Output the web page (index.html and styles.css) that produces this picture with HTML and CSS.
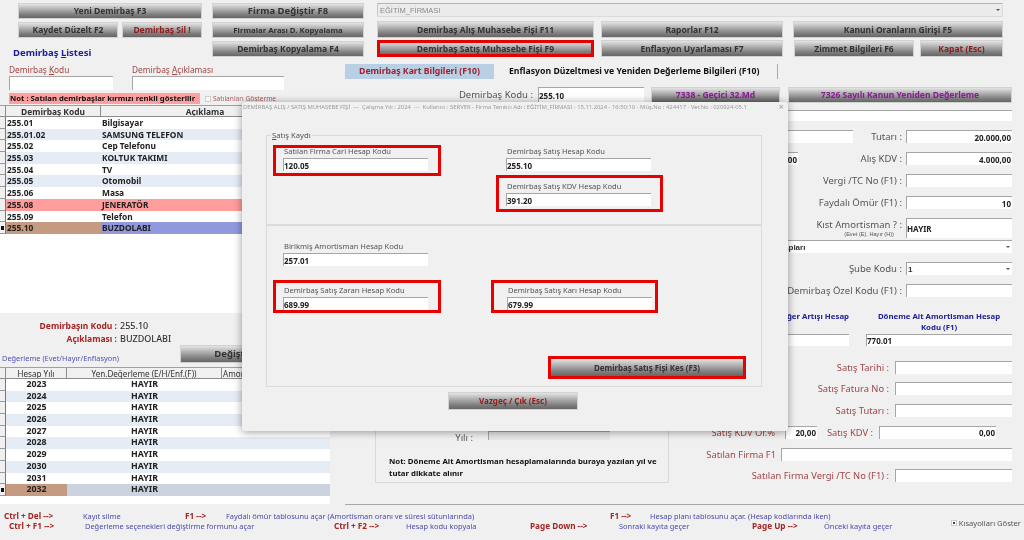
FILE: index.html
```
<!DOCTYPE html>
<html lang="tr">
<head>
	<meta charset="UTF-8">
	<title>Demirbaş</title>
	<link rel="stylesheet" href="styles.css">
</head>
<body>
	<div class="app">
		<!-- üst butonlar -->
		<header class="topbar">
			<div class="col-a">
				<button class="btn" type="button">Yeni Demirbaş F3</button>
				<div class="btn-pair">
					<button class="btn" type="button">Kaydet Düzelt F2</button>
					<button class="btn btn-danger" type="button">Demirbaş Sil !</button>
				</div>
				<h2 class="list-title">Demirbaş <u>L</u>istesi</h2>
			</div>
			<div class="col-b">
				<button class="btn btn-big" type="button">Firma Değiştir F8</button>
				<button class="btn btn-small" type="button">Firmalar Arası D. Kopyalama</button>
				<button class="btn" type="button">Demirbaş Kopyalama F4</button>
			</div>
			<div class="col-c">
				<div class="firm-combo"><span>EĞİTİM_FİRMASI</span><i class="arrow"></i></div>
				<div class="btn-row">
					<button class="btn" type="button">Demirbaş Alış Muhasebe Fişi F11</button>
					<button class="btn" type="button">Raporlar F12</button>
					<button class="btn" type="button">Kanuni Oranların Girişi F5</button>
				</div>
				<div class="btn-row">
					<button class="btn btn-marked" type="button">Demirbaş Satış Muhasebe Fişi F9</button>
					<button class="btn" type="button">Enflasyon Uyarlaması F7</button>
					<div class="btn-split">
						<button class="btn" type="button">Zimmet Bilgileri F6</button>
						<button class="btn btn-danger" type="button">Kapat (Esc)</button>
					</div>
				</div>
			</div>
		</header>

		<div class="main">
			<!-- sol taraf: liste -->
			<section class="left">
				<div class="filters">
					<label class="filter filter-code">Demirbaş <u>K</u>odu<input class="inp" type="text"></label>
					<label class="filter filter-desc">Demirbaş <u>A</u>çıklaması<input class="inp" type="text"></label>
				</div>
				<div class="note-row">
					<div class="note">Not : Satılan demirbaşlar kırmızı renkli gösterilir</div>
					<span class="check-box"></span>
					<span class="note-check">Satılanları Gösterme</span>
				</div>
				<div class="panel panel-list">
					<div class="grid-row grid-head list-cols"><span class="rowhead"></span><span>Demirbaş Kodu</span><span>Açıklama</span></div>
					<div class="grid-row list-cols"><span class="rowhead"></span><span class="tl">255.01</span><span class="tl">Bilgisayar</span></div>
					<div class="grid-row alt list-cols"><span class="rowhead"></span><span class="tl">255.01.02</span><span class="tl">SAMSUNG TELEFON</span></div>
					<div class="grid-row list-cols"><span class="rowhead"></span><span class="tl">255.02</span><span class="tl">Cep Telefonu</span></div>
					<div class="grid-row alt list-cols"><span class="rowhead"></span><span class="tl">255.03</span><span class="tl">KOLTUK TAKIMI</span></div>
					<div class="grid-row list-cols"><span class="rowhead"></span><span class="tl">255.04</span><span class="tl">TV</span></div>
					<div class="grid-row alt list-cols"><span class="rowhead"></span><span class="tl">255.05</span><span class="tl">Otomobil</span></div>
					<div class="grid-row list-cols"><span class="rowhead"></span><span class="tl">255.06</span><span class="tl">Masa</span></div>
					<div class="grid-row sold list-cols"><span class="rowhead"></span><span class="tl">255.08</span><span class="tl">JENERATÖR</span></div>
					<div class="grid-row list-cols"><span class="rowhead"></span><span class="tl">255.09</span><span class="tl">Telefon</span></div>
					<div class="grid-row list-cols"><span class="rowhead current"></span><span class="tl sel-a">255.10</span><span class="tl sel-b">BUZDOLABI</span></div>
				</div>
				<div class="info">
					<div class="info-line"><span class="info-key">Demirbaşın Kodu :</span><span class="info-val">255.10</span></div>
					<div class="info-line"><span class="info-key">Açıklaması :</span><span class="info-val">BUZDOLABI</span></div>
					<div class="info-foot">
						<span class="reval">Değerleme (Evet/Hayır/Enflasyon)</span>
						<button class="btn btn-change" type="button">Değiştir</button>
					</div>
				</div>
				<div class="panel panel-years">
					<div class="grid-row grid-head year-cols"><span class="rowhead"></span><span>Hesap Yılı</span><span>Yen.Değerleme (E/H/Enf.(F))</span><span class="tl">Amortisman</span></div>
					<div class="grid-row year-cols"><span class="rowhead"></span><span>2023</span><span>HAYIR</span><span></span></div>
					<div class="grid-row alt year-cols"><span class="rowhead"></span><span>2024</span><span>HAYIR</span><span></span></div>
					<div class="grid-row year-cols"><span class="rowhead"></span><span>2025</span><span>HAYIR</span><span></span></div>
					<div class="grid-row alt year-cols"><span class="rowhead"></span><span>2026</span><span>HAYIR</span><span></span></div>
					<div class="grid-row year-cols"><span class="rowhead"></span><span>2027</span><span>HAYIR</span><span></span></div>
					<div class="grid-row alt year-cols"><span class="rowhead"></span><span>2028</span><span>HAYIR</span><span></span></div>
					<div class="grid-row year-cols"><span class="rowhead"></span><span>2029</span><span>HAYIR</span><span></span></div>
					<div class="grid-row alt year-cols"><span class="rowhead"></span><span>2030</span><span>HAYIR</span><span></span></div>
					<div class="grid-row year-cols"><span class="rowhead"></span><span>2031</span><span>HAYIR</span><span></span></div>
					<div class="grid-row sel-row year-cols"><span class="rowhead current"></span><span class="sel-a">2032</span><span>HAYIR</span><span></span></div>
				</div>
			</section>

			<!-- sağ taraf: kart -->
			<section class="right">
				<div class="tabs">
					<span class="tab tab-on">Demirbaş Kart Bilgileri (F10)</span>
					<span class="tab tab-off">Enflasyon Düzeltmesi ve Yeniden Değerleme Bilgileri (F10)</span>
				</div>
				<div class="code-row">
					<span class="lbl code-lbl">Demirbaş Kodu :</span>
					<input class="inp inp-code" type="text" value="255.10">
					<button class="btn btn-purple btn-32" type="button">7338 - Geçici 32.Md</button>
					<button class="btn btn-purple btn-7326" type="button">7326 Sayılı Kanun Yeniden Değerleme</button>
				</div>
				<div class="form">
					<input class="inp inp-long" type="text">
					<div class="form-row">
						<div class="split"><input class="inp inp-w1" type="text"><span class="lbl">Tutarı :</span></div>
						<input class="inp num" type="text" value="20.000,00">
					</div>
					<div class="form-row">
						<div class="split"><input class="inp inp-w2 num" type="text" value="0,00"><span class="lbl">Alış KDV :</span></div>
						<input class="inp num" type="text" value="4.000,00">
					</div>
					<div class="form-row">
						<span class="lbl">Vergi /TC No (F1) :</span>
						<input class="inp" type="text">
					</div>
					<div class="form-row">
						<span class="lbl">Faydalı Ömür (F1) :</span>
						<input class="inp num" type="text" value="10">
					</div>
					<div class="form-row">
						<span class="lbl lbl-stack">Kıst Amortisman ? :<small>(Evet (E), Hayır (H))</small></span>
						<input class="inp" type="text" value="HAYIR">
					</div>
					<div class="combo combo-wide"><span>Normal Amortisman Hesapları</span><i class="arrow"></i></div>
					<div class="form-row">
						<span class="lbl">Şube Kodu :</span>
						<div class="combo"><span>1</span><i class="arrow arrow-box"></i></div>
					</div>
					<div class="form-row">
						<span class="lbl">Demirbaş Özel Kodu (F1) :</span>
						<input class="inp" type="text">
					</div>
				</div>
				<div class="lower">
					<div class="year-box">
						<div class="year-line"><span class="lbl">Yılı :</span><input class="inp inp-year" type="text"></div>
						<p class="year-note">Not: Döneme Ait Amortisman hesaplamalarında buraya yazılan yıl ve tutar dikkate alınır</p>
					</div>
					<div class="sales">
						<div class="acc-head">
							<span>Döneme Ait Değer Artışı Hesap</span>
							<span>Döneme Ait Amortisman Hesap<br>Kodu (F1)</span>
						</div>
						<div class="acc-inputs">
							<input class="inp" type="text">
							<input class="inp" type="text" value="770.01">
						</div>
						<div class="sale-rows">
							<div class="sale-row"><span class="lbl red">Satış Tarihi :</span><input class="inp" type="text"></div>
							<div class="sale-row"><span class="lbl red">Satış Fatura No :</span><input class="inp" type="text"></div>
							<div class="sale-row"><span class="lbl red">Satış Tutarı :</span><input class="inp" type="text"></div>
							<div class="sale-row sale-kdv">
								<span class="lbl red">Satış KDV Or.%</span>
								<input class="inp num" type="text" value="20,00">
								<span class="lbl red">Satış KDV :</span>
								<input class="inp num" type="text" value="0,00">
							</div>
							<div class="sale-row sale-firm"><span class="lbl red">Satılan Firma F1</span><input class="inp" type="text"></div>
							<div class="sale-row"><span class="lbl red">Satılan Firma Vergi /TC No (F1) :</span><input class="inp" type="text"></div>
						</div>
					</div>
				</div>
			</section>
		</div>

		<!-- kısayollar -->
		<footer class="shortcuts">
			<div class="short-rows">
				<div class="short-row row-1">
					<b>Ctrl + Del --&gt;</b><span>Kayıt silme</span>
					<b>F1 --&gt;</b><span>Faydalı ömür tablosunu açar (Amortisman oranı ve süresi sütunlarında)</span>
					<b>F1 --&gt;</b><span>Hesap planı tablosunu açar. (Hesap kodlarında iken)</span>
				</div>
				<div class="short-row row-2">
					<b>Ctrl + F1 --&gt;</b><span>Değerleme seçenekleri değiştirme formunu açar</span>
					<b>Ctrl + F2 --&gt;</b><span>Hesap kodu kopyala</span>
					<b>Page Down --&gt;</b><span>Sonraki kayıta geçer</span>
					<b>Page Up --&gt;</b><span>Önceki kayıta geçer</span>
				</div>
			</div>
			<div class="short-toggle"><span class="check-box checked"></span>Kısayolları Göster</div>
		</footer>

		<!-- satış penceresi -->
		<div class="dialog">
			<div class="dlg-title">
				<span>DEMİRBAŞ ALIŞ / SATIŞ MUHASEBE FİŞİ &nbsp;--- &nbsp;Çalışma Yılı : 2024 &nbsp;--- &nbsp;Kullanıcı : SERVER - Firma Tanıtıcı Adı : EĞİTİM_FİRMASI - 15.11.2024 - 16:50:10 - Müş.No : 424417 - Ver.No : 020924-05.1</span>
				<span class="dlg-close">×</span>
			</div>
			<fieldset class="dlg-group">
				<legend><u>S</u>atış Kaydı</legend>
				<div class="dlg-top">
					<div class="field mark mark-a">
						<label>Satılan Firma Cari Hesap Kodu</label>
						<input class="inp" type="text" value="120.05">
					</div>
					<div class="dlg-stack">
						<div class="field plain">
							<label>Demirbaş Satış Hesap Kodu</label>
							<input class="inp" type="text" value="255.10">
						</div>
						<div class="field mark mark-c">
							<label>Demirbaş Satış KDV Hesap Kodu</label>
							<input class="inp" type="text" value="391.20">
						</div>
					</div>
				</div>
				<div class="dlg-bottom">
					<div class="field single">
						<label>Birikmiş Amortisman Hesap Kodu</label>
						<input class="inp" type="text" value="257.01">
					</div>
					<div class="dlg-pair">
						<div class="field mark mark-d">
							<label>Demirbaş Satış Zararı Hesap Kodu</label>
							<input class="inp" type="text" value="689.99">
						</div>
						<div class="field mark mark-e">
							<label>Demirbaş Satış Karı Hesap Kodu</label>
							<input class="inp" type="text" value="679.99">
						</div>
					</div>
					<div class="dlg-action">
						<button class="btn btn-marked btn-invoice" type="button">Demirbaş Satış Fişi Kes (F3)</button>
					</div>
				</div>
			</fieldset>
			<button class="btn btn-danger btn-cancel" type="button">Vazgeç / Çık (Esc)</button>
		</div>
	</div>
</body>
</html>
```

FILE: styles.css
```
* {
	box-sizing: border-box;
}

body {
	margin: 0;
	overflow: hidden;
	font-family: "Noto Sans", sans-serif;
	background-color: #f0f0f0;
}

.app {
	position: relative;
	width: 1024px;
	height: 540px;
	overflow: hidden;
	background-color: #f0f0f0;
	color: #333;
	font-size: 8px;
	filter: blur(0.35px);
}

/* girişler */
.inp {
	min-width: 0;
	width: 100%;
	padding: 0 1px 0 0;
	border: none;
	border-top: 1.5px solid #a6a6a6;
	border-left: 1px solid #a6a6a6;
	background-color: #fff;
	color: #222;
	font-family: inherit;
	font-size: 8px;
	font-weight: 700;
	outline: none;
}

.num {
	text-align: right;
}

.lbl {
	color: #555;
	font-size: 9.5px;
	line-height: 13px;
	white-space: nowrap;
	text-align: right;
}

.red {
	color: #a04545;
	font-size: 9.35px;
}

/* butonlar */
.btn {
	display: block;
	width: 100%;
	height: 16px;
	padding: 0;
	border: 1px solid #d2d2d2;
	background: linear-gradient(#e4e4e4, #b4b4b4 35%, #7e7e7e 75%, #666);
	color: #333;
	font-family: inherit;
	font-size: 8.5px;
	font-weight: 700;
	line-height: 12px;
	white-space: nowrap;
	overflow: hidden;
}

.btn-danger {
	color: #8f1c1c;
}

.btn-purple {
	color: #8a1a96;
}

.btn-big {
	font-size: 9.5px;
}

.btn-small {
	font-size: 7.8px;
}

.btn-marked {
	border: 2px solid #e60000;
	outline: 1px solid #e60000;
	outline-offset: -3px;
}

/* üst bar */
.topbar {
	display: flex;
	height: 60px;
	padding: 3px 21px 0 18px;
}

.col-a {
	width: 184px;
	display: flex;
	flex-direction: column;
	gap: 3px;
}

.btn-pair {
	display: grid;
	grid-template-columns: 100px 80px;
	gap: 4px;
}

.list-title {
	margin: 5px 0 0 -5px;
	font-size: 9.5px;
	line-height: 14px;
	color: #20209a;
}

.col-b {
	width: 152px;
	margin-left: 10px;
	display: flex;
	flex-direction: column;
	gap: 3px;
}

.col-c {
	width: 626px;
	margin-left: 13px;
	display: flex;
	flex-direction: column;
	gap: 2px;
}

.col-c .btn {
	height: 17px;
}

.firm-combo {
	display: flex;
	align-items: center;
	justify-content: space-between;
	height: 14px;
	margin-bottom: 2px;
	padding: 0 2px;
	border-top: 1px solid #b4b4b4;
	border-left: 1px solid #c8c8c8;
	border-right: 1px solid #dcdcdc;
	border-bottom: 1px solid #dcdcdc;
	background-color: #ebebeb;
	color: #8a8a8a;
	font-family: "Liberation Sans", sans-serif;
	font-size: 7.5px;
}

.arrow {
	display: block;
	width: 0;
	height: 0;
	border-left: 2px solid transparent;
	border-right: 2px solid transparent;
	border-top: 2px solid #555;
}

.btn-row {
	display: grid;
	grid-template-columns: 217px 182px 1fr;
	column-gap: 7px;
}

.btn-split {
	display: grid;
	grid-template-columns: 120px 83px;
	column-gap: 6px;
	margin-left: 4px;
}

.btn-row > .btn:nth-child(3) {
	width: 210px;
	margin-left: 3px;
}

/* ana gövde */
.main {
	display: flex;
	height: 445px;
}

.left {
	width: 345px;
	flex: none;
	display: flex;
	flex-direction: column;
}

.right {
	width: 679px;
	padding-top: 4px;
	border-bottom: 1px solid #a8a8a8;
}

/* sol filtre */
.filters {
	display: flex;
	gap: 19px;
	padding: 3px 0 0 9px;
}

.filter {
	display: block;
	color: #a04545;
	font-size: 8.3px;
	line-height: 13px;
}

.filter .inp {
	display: block;
	width: 100%;
	height: 14px;
}

.filter-code {
	width: 104px;
}

.filter-desc {
	width: 152px;
}

.note-row {
	display: flex;
	align-items: center;
	height: 11px;
	margin: 3px 0 1px 9px;
}

.note {
	width: 191px;
	height: 11px;
	padding-left: 1px;
	background-color: #ff9f9f;
	color: #111;
	font-size: 7.7px;
	font-weight: 700;
	line-height: 11px;
	white-space: nowrap;
}

.check-box {
	display: inline-block;
	width: 6px;
	height: 6px;
	margin: 0 2px 0 5px;
	border: 1px solid #ccc;
	background-color: #fff;
}

.note-check {
	color: #a85a5a;
	font-size: 6.6px;
	white-space: nowrap;
}

/* tablolar */
.panel {
	background-color: #fff;
	overflow: hidden;
}

.panel-list {
	height: 208px;
}

.panel-years {
	width: 330px;
	height: 137px;
}

.grid-row {
	display: grid;
	height: 11.7px;
	align-items: stretch;
	font-size: 8.4px;
	font-weight: 700;
	line-height: 11px;
	color: #222;
	text-align: center;
}

.grid-row > span {
	overflow: hidden;
	white-space: nowrap;
}

.list-cols {
	grid-template-columns: 6px 95px 209px 1fr;
}

.year-cols {
	grid-template-columns: 6px 61px 155px 1fr;
	font-size: 8.8px;
}

.alt {
	background-color: #e5ecf6;
}

.grid-head {
	height: 12px;
	background-color: #f0f0f0;
	border-top: 1px solid #a0a0a0;
	font-weight: 700;
	color: #333;
}

.panel-years .grid-head {
	font-weight: 400;
	font-size: 8.1px;
}

.grid-head > span {
	border-right: 1px solid #8c8c8c;
	border-bottom: 1px solid #8c8c8c;
}

.rowhead {
	background-color: #f0f0f0;
	border-right: 1px solid #777;
	border-bottom: 1px solid #999;
}

.rowhead.current {
	background: linear-gradient(#111, #111) center / 3px 4px no-repeat #f0f0f0;
}

.tl {
	padding-left: 1px;
	text-align: left;
}

.sold {
	background-color: #ff9c9c;
}

.sel-a {
	background-color: #c49a80;
}

.sel-b {
	background-color: #9298dc;
}

.list-cols .sel-b {
	grid-column: span 2;
}

.sel-row {
	background-color: #cbd3e0;
}

/* alt bilgi */
.info {
	height: 54px;
	padding-top: 6px;
}

.info-line {
	display: flex;
	height: 13px;
	font-size: 8.5px;
	line-height: 13px;
}

.info-key {
	width: 117px;
	color: #a52525;
	font-weight: 700;
	text-align: right;
}

.info-val {
	margin-left: 3px;
	color: #333;
	font-size: 9px;
	font-weight: 500;
}

.info-foot {
	display: flex;
	align-items: flex-end;
	height: 18px;
}

.reval {
	width: 180px;
	padding-left: 2px;
	color: #5050b0;
	font-size: 7.4px;
	white-space: nowrap;
}

.btn-change {
	width: 106px;
	height: 18px;
	font-size: 9.5px;
}

/* sağ üst */
.tabs {
	display: flex;
	height: 15px;
	gap: 9px;
	font-size: 8.7px;
	font-weight: 700;
	line-height: 15px;
}

.tab-on {
	width: 149px;
	background-color: #b8cfe4;
	color: #a02030;
	text-align: center;
}

.tab-off {
	width: 275px;
	padding-left: 6px;
	border-right: 1px solid #aaa;
	color: #111;
}

.code-row {
	display: flex;
	align-items: flex-end;
	height: 17px;
	margin-top: 7px;
}

.code-lbl {
	flex: none;
	width: 188px;
	align-self: center;
}

.inp-code {
	flex: none;
	width: 106px;
	height: 16px;
	margin: 0 7px 0 5px;
}

.btn-32 {
	flex: none;
	width: 129px;
	margin-right: 8px;
}

.btn-7326 {
	flex: none;
	width: 224px;
}

.form {
	display: flex;
	flex-direction: column;
	gap: 9px;
	width: 474px;
	height: 187px;
	margin: 7px 0 0 193px;
}

.inp-long {
	height: 11px;
}

.form-row {
	display: grid;
	grid-template-columns: 1fr 106px;
	column-gap: 4px;
	height: 13px;
}

.split {
	display: flex;
	justify-content: space-between;
}

.inp-w1 {
	width: 315px;
}

.inp-w2 {
	width: 260px;
}

.lbl-stack {
	display: flex;
	flex-direction: column;
	align-items: flex-end;
}

.lbl-stack small {
	padding-right: 8px;
	font-family: "Liberation Sans", sans-serif;
	font-size: 5.6px;
	line-height: 7px;
}

.combo {
	display: flex;
	align-items: center;
	justify-content: space-between;
	height: 13px;
	padding: 0 2px 0 1px;
	border-top: 1.5px solid #a6a6a6;
	border-left: 1px solid #a6a6a6;
	background-color: #fff;
	font-family: "Liberation Sans", sans-serif;
	font-size: 8px;
	font-weight: 700;
}

.combo-wide {
	padding-left: 152px;
}

/* alt bölüm */
.lower {
	display: flex;
	gap: 11px;
	height: 183px;
	margin: 3px 0 0 30px;
}

.year-box {
	display: flex;
	flex-direction: column;
	justify-content: flex-end;
	width: 294px;
	padding: 0 5px 3px 13px;
	border-right: 1px solid #d8d8d8;
	border-bottom: 1px solid #d8d8d8;
	border-left: 1px solid #d8d8d8;
	overflow: hidden;
}

.year-line {
	display: flex;
	height: 9px;
	margin-bottom: 15px;
	justify-content: flex-end;
	padding-right: 53px;
}

.inp-year {
	width: 122px;
	height: 9px;
	margin-left: 15px;
	background-color: #e6e6e6;
}

.year-note {
	margin: 0;
	height: 24px;
	color: #111;
	font-size: 7.8px;
	font-weight: 700;
	line-height: 12px;
}

.sales {
	width: 332px;
	padding-top: 10.5px;
}

.acc-head {
	display: grid;
	grid-template-columns: 169px 146px;
	column-gap: 17px;
	height: 22px;
	color: #20209a;
	font-size: 7.8px;
	font-weight: 700;
	line-height: 11px;
	text-align: center;
	white-space: nowrap;
}

.acc-head span:first-child {
	text-align: right;
}

.acc-inputs {
	display: grid;
	grid-template-columns: 169px 146px;
	column-gap: 17px;
	height: 12px;
	margin-top: 1px;
}

.sale-rows {
	display: flex;
	flex-direction: column;
	gap: 9.8px;
	margin-top: 15px;
}

.sale-row {
	display: grid;
	grid-template-columns: 209px 117px;
	column-gap: 6px;
	height: 12px;
	line-height: 12px;
}

.sale-kdv {
	grid-template-columns: 95px 32px 66px 117px;
	column-gap: 0;
}

.sale-kdv .inp:first-of-type {
	margin-left: 10px;
	width: 32px;
}

.sale-kdv .inp:last-child {
	margin-left: 6px;
}

.sale-firm {
	grid-template-columns: 96px 231px;
	column-gap: 5px;
}

/* kısayollar */
.shortcuts {
	display: flex;
	height: 35px;
}

.short-rows {
	flex: 1;
	padding-top: 6px;
}

.short-row {
	display: grid;
	height: 10px;
	font-size: 7.45px;
	line-height: 10px;
	white-space: nowrap;
	color: #4a4ab0;
}

.short-row b {
	color: #a52525;
	font-size: 8.2px;
}

.row-1 {
	grid-template-columns: 79px 102px 41px 384px 40px auto;
	padding-left: 4px;
}

.row-2 {
	grid-template-columns: 76px 249px 72px 124px 89px 133px 72px auto;
	padding-left: 9px;
}

.short-toggle {
	display: flex;
	align-items: center;
	height: 10px;
	margin: 13px 3px 0 0;
	color: #555;
	font-size: 7.6px;
	white-space: nowrap;
}

.checked {
	background: linear-gradient(#444, #444) center / 2px 2px no-repeat #fff;
}

/* pencere */
.dialog {
	position: absolute;
	left: 242px;
	top: 102px;
	width: 546px;
	height: 329px;
	padding: 0 26px 0 24px;
	border-radius: 3px;
	background-color: #f0f0f0;
	box-shadow: 0 1px 8px rgba(0, 0, 0, 0.4);
}

.dlg-title {
	display: flex;
	justify-content: space-between;
	height: 10px;
	margin: 0 -22px 0 -23px;
	color: #9a9a9a;
	font-size: 5.85px;
	line-height: 10px;
	white-space: nowrap;
}

.dlg-close {
	font-size: 9px;
}

.dlg-group {
	height: 257px;
	margin: 18px 0 5px;
	padding: 0;
	border: 1px solid #dadada;
	min-width: 0;
}

.dlg-group legend {
	margin-left: 4px;
	padding: 0 1px;
	color: #555;
	font-size: 7.7px;
	line-height: 10px;
}

.dlg-top {
	display: flex;
	height: 86px;
	padding: 5px 0 0 6px;
	border-bottom: 2px solid #dcdcdc;
}

.field label {
	display: block;
	height: 10px;
	padding-left: 1px;
	color: #555;
	font-size: 7.55px;
	line-height: 7px;
	white-space: nowrap;
}

.field .inp {
	display: block;
	width: 145px;
	height: 13px;
}

.mark {
	border: 3px solid #e60000;
}

.mark-a {
	width: 168px;
	height: 31px;
	padding-left: 7px;
}

.dlg-stack {
	margin-left: 55px;
}

.plain {
	padding: 3px 0 0 10px;
}

.mark-c {
	width: 167px;
	height: 37px;
	margin-top: 4px;
	padding: 5px 0 0 7px;
}

.dlg-bottom {
	padding: 17px 0 0 16px;
}

.single {
	height: 37px;
}

.dlg-pair {
	display: flex;
	gap: 50px;
	margin: 0 0 0 -10px;
}

.mark-d {
	width: 168px;
	height: 33px;
	padding: 4px 0 0 7px;
}

.mark-e {
	width: 167px;
	height: 33px;
	padding: 4px 0 0 13px;
}

.dlg-action {
	display: flex;
	justify-content: flex-end;
	margin: 43px 15px 0 0;
}

.btn-invoice {
	width: 198px;
	height: 23px;
	border-width: 3px;
	outline: none;
	font-size: 7.9px;
}

.btn-cancel {
	width: 130px;
	height: 18px;
	margin-left: 182px;
	font-size: 8px;
}
```
